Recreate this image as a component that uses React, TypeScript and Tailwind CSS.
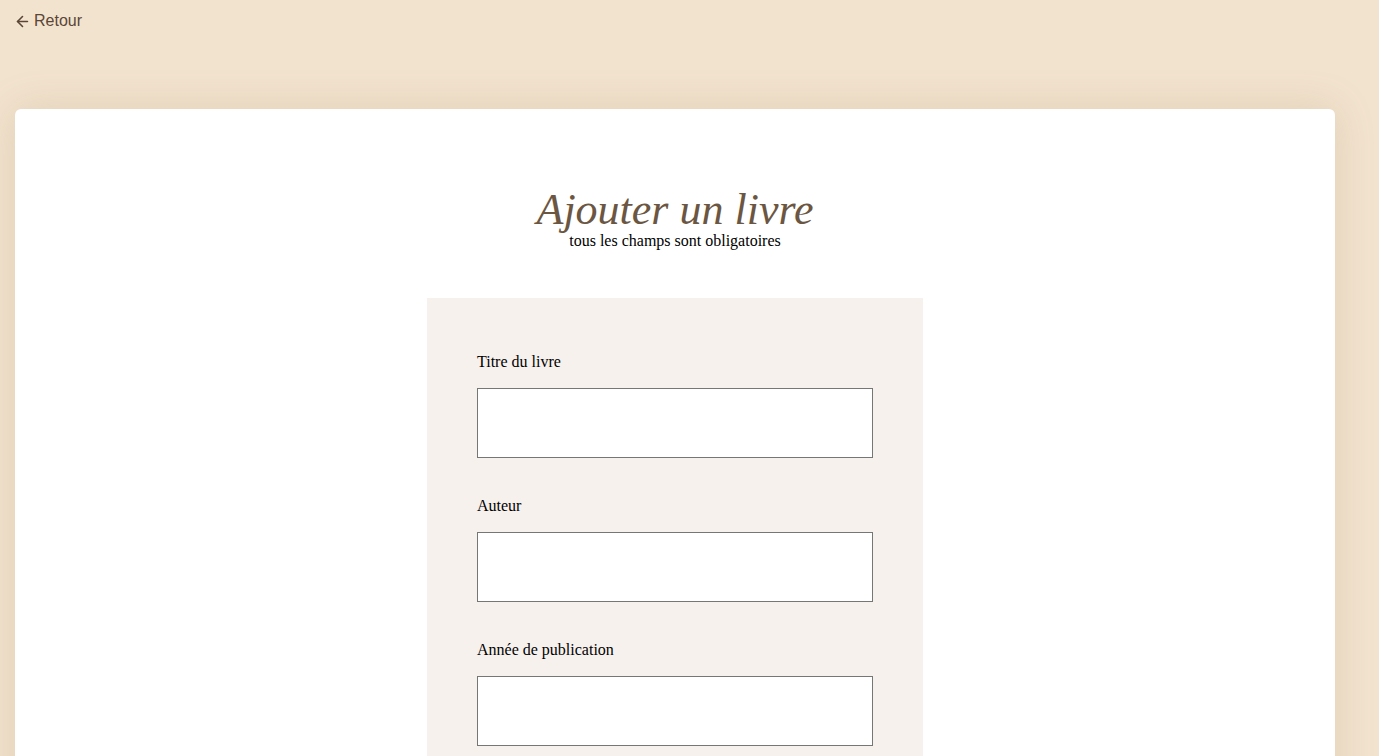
import React from "react";
import { ArrowLeft } from "lucide-react";

const fields = [
  { id: "titre", label: "Titre du livre" },
  { id: "auteur", label: "Auteur" },
  { id: "annee", label: "Année de publication" },
];

const App: React.FC = () => {
  return (
    <div className="min-h-screen bg-[#f2e3cf] pb-10">
      <div className="px-[14px] pt-[9px] h-[109px]">
        <a
          href="#"
          className="inline-flex items-center gap-[3px] text-[16px] text-[#5b4636] font-['Liberation_Sans',Arial,sans-serif]"
        >
          <ArrowLeft size={17} strokeWidth={2.25} />
          Retour
        </a>
      </div>

      <div className="mx-[15px] w-[1320px] bg-white rounded-md shadow-[0_0_40px_rgba(150,110,60,0.18)] pt-[79px] pb-[80px] font-['Liberation_Serif','Times_New_Roman',serif]">
        <div className="flex flex-col items-center">
          <h1 className="italic text-[44px] leading-[44px] text-[#6b5642]">
            Ajouter un livre
          </h1>
          <p className="text-[16px] leading-[18px] text-black">
            tous les champs sont obligatoires
          </p>
        </div>

        <form className="mx-auto mt-[48px] w-[496px] bg-[#f7f1ee] px-[50px] pt-[55px] pb-[50px] flex flex-col gap-[39px]">
          {fields.map((f) => (
            <div key={f.id} className="flex flex-col">
              <label htmlFor={f.id} className="text-[16px] leading-[18px] text-black mb-[17px]">
                {f.label}
              </label>
              <input
                id={f.id}
                type="text"
                className="h-[70px] w-full bg-white border border-[#767676] outline-none"
              />
            </div>
          ))}
        </form>
      </div>
    </div>
  );
};

export default App;
